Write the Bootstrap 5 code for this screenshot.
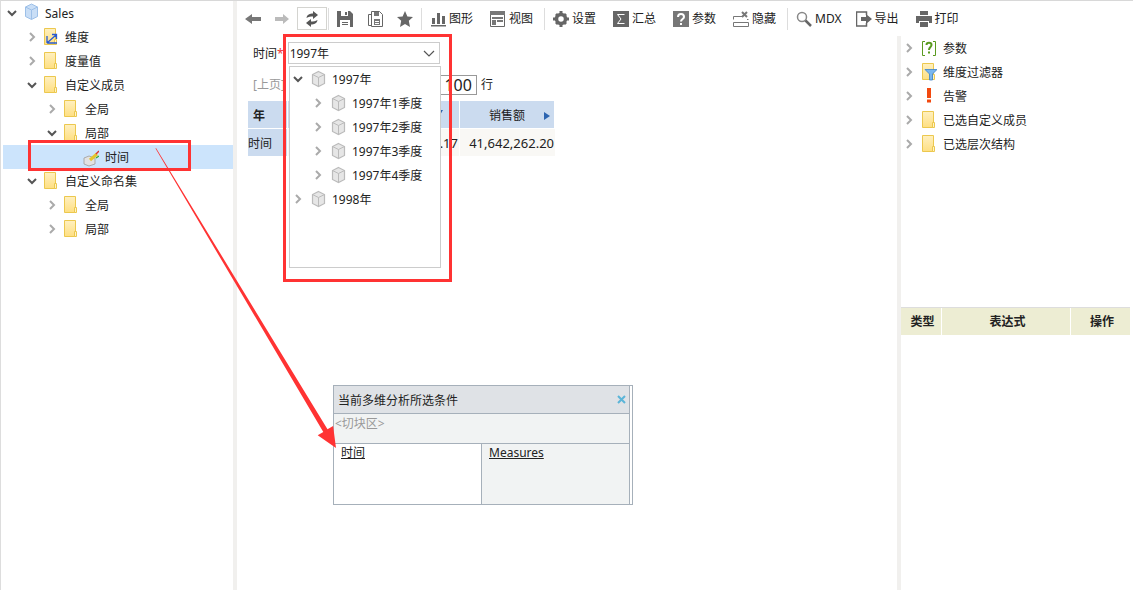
<!DOCTYPE html>
<html lang="zh"><head><meta charset="utf-8"><title>Sales</title>
<link href="https://cdn.jsdelivr.net/npm/bootstrap@5.3.0/dist/css/bootstrap.min.css" rel="stylesheet">
<style>
html,body{height:100%;overflow:hidden}
body{font:12px/16px "Noto Sans","Noto Sans CJK SC",sans-serif;color:#222;background:#fff;position:relative}
.app-frame{height:590px;border-top:1px solid #d8d8d8;border-left:1px solid #ddd}
.side-pane{width:232px;flex:none;padding:0 0 0 2px}
.vsplit{width:4px;flex:none;background:#f1f0ee}
.work-area{flex:1;min-width:0;display:flex;flex-direction:column}
.work-body{flex:1;display:flex;min-height:0}
.main-pane{width:660px;flex:none;position:relative;padding-left:11px}
.right-pane{flex:1;margin-right:3px}
.tree-row{height:24px;padding-top:2px;display:flex;align-items:center;white-space:nowrap}
.tree-row.sel{background:#cce4fc}
.tw{width:16px;height:16px;flex:none;margin:-2px 3px 0 0}
.ic{width:16px;height:20px;flex:none;margin:-2px 6px 0 0}
.lv0{padding-left:1px}.lv1{padding-left:21px}.lv2{padding-left:41px}.lv3{padding-left:80px}
.tool-bar{height:35px;padding-left:8px;display:flex;align-items:center}
.tool{display:flex;align-items:center;gap:3px;margin-right:17px;white-space:nowrap}
.tool svg{width:16px;height:16px;flex:none}
.tool-tight{margin-right:14px}
.tool-star{margin-right:8px}
.tool-mid{margin-right:11px}
.tool-chart svg{width:15px}
.tool-box{width:30px;height:23px;flex:none;border:1px solid #d4d4d0;display:flex;align-items:center;justify-content:center;margin:0 1px 0 -8px}
.tool-box svg{width:16px;height:16px}
.tsep{width:1px;height:22px;flex:none;background:#ddd;margin-right:8px}
.tsep-wide{margin-right:9px}
.filter-row{height:22px;padding-left:5px;display:flex;align-items:center;margin-top:6px;padding-top:0}
.filter-label{padding-top:1px}
.req-mark{color:#e33}
.combo{margin-left:4px;position:relative;width:152px;height:22px;border:1px solid #ccc;padding:1px 0 0 1px;line-height:20px;background:#fff}
.combo svg{position:absolute;right:3px;top:4px;width:14px;height:12px}
.pager{height:20px;padding-left:5px;margin-top:11px;display:flex;align-items:center;color:#999}
.pageinput{margin-left:145px;width:47px;height:20px;border:1px solid #999;color:#222;line-height:18px;padding-right:4px;font-size:16px;text-align:right}
.pager-unit{margin-left:4px;color:#222}
.cube-grid{margin-top:6px;table-layout:fixed;width:307px;border-collapse:separate;border-spacing:0;font-size:13px}
.cube-grid th{background:#cbdbef;height:28px;font-weight:400;font-size:12px;padding:3px 0 0;border-right:1px solid #fff;border-bottom:1px solid #fff}
.cube-grid td{height:27px;padding:0 1px 0 0;background:#f9f8f5;white-space:nowrap;border-right:1px solid #fff}
.cube-grid td:last-child{border-right:0}
.cube-grid td.hd{background:#cbdbef;font-size:12px;padding-top:3px}
.cube-grid th.yr{font-weight:700;padding-left:5px}
.c1{width:40px}.c2{width:172px}.c3{width:95px}
.dd-panel{position:absolute;left:52px;top:30px;width:152px;height:202px;border:1px solid #ccc;background:#fff;z-index:3}
.dd-panel .tw{margin-right:5px}
.dd-panel .ic{margin-right:5px}
.dd-panel .l1{padding-left:20px}
.red-box{position:absolute;border:3px solid #f33;z-index:5;pointer-events:none}
.rb1{left:28px;top:140px;width:163px;height:31px}
.rb2{left:283px;top:34px;width:169px;height:248px}
.arrow-layer{position:absolute;left:0;top:0;width:1133px;height:592px;z-index:6;pointer-events:none}
.rp-tree{height:271px}
.rp-tree .tw{margin-right:4px}
.cond-grid{border-top:1px solid #ddd;display:grid;grid-template-columns:40px 128px 1fr;gap:0 1px;background:#fff;height:27px}
.cond-grid div{background:#ededd3;font-weight:700;font-size:12px;text-align:center;line-height:27px;padding-left:3px}
.dlg{position:absolute;left:333px;top:385px;width:300px;height:120px;border:1px solid #a6b0ba;background:#fff;z-index:4}
.dlg-inner{width:296px;border-right:1px solid #a6b0ba;height:100%;display:flex;flex-direction:column}
.dlg-head{height:28px;background:#dfe2e6;border-bottom:1px solid #a6b0ba;padding-left:4px;line-height:29px;position:relative}
.dlg-x{position:absolute;right:3px;top:9px;width:9px;height:9px}
.dlg-slice{height:30px;background:#f1f3f3;border-bottom:1px solid #a6b0ba;color:#999;line-height:20px;padding-left:1px}
.dlg-cols{flex:1;display:flex}
.dlg-c1{width:148px;border-right:1px solid #a6b0ba;padding:1px 0 0 7px;text-decoration:underline}
.dlg-c2{flex:1;background:#f1f3f3;padding:1px 0 0 7px;text-decoration:underline}
</style></head><body>
<svg width="0" height="0" class="position-absolute">
<defs>
<linearGradient id="fg" x1="0" y1="0" x2="0" y2="1"><stop offset="0" stop-color="#fff0c0"/><stop offset="1" stop-color="#fedf82"/></linearGradient>
<symbol id="open" viewBox="0 0 16 16"><path d="M4 6l4 4 4-4" fill="none" stroke="#555" stroke-width="2"/></symbol>
<symbol id="closed" viewBox="0 0 16 16"><path d="M6 4l4 4-4 4" fill="none" stroke="#aaa" stroke-width="2"/></symbol>
<symbol id="folder" viewBox="0 0 16 20"><path d="M1.500 1.500h11v16h-11z" fill="url(#fg)" stroke="#ecc84e"/><path d="M11.500 12.500h2v5h-2z" fill="#fff3c8" stroke="#ecc84e"/></symbol>
<symbol id="cube" viewBox="0 0 16 20"><path d="M7.500 2.500l6 3v9l-6 3-6-3v-9z" fill="#e6e6e6" stroke="#bbb" stroke-width="1.200"/><path d="M1.500 5.500l6 3 6-3M7.500 8.500v9" fill="none" stroke="#bbb"/></symbol>
<symbol id="bluecube" viewBox="0 0 16 20"><path d="M8.500 1l6 3v9.500l-6 3-6-3V4z" fill="#c9def6" stroke="#9dc0e8"/><path d="M2.500 4l6 3 6-3M8.500 7v9.500" fill="none" stroke="#9dc0e8"/></symbol>
</defs></svg>

<div class="app-frame d-flex">
<aside class="side-pane">
<div class="tree-row lv0"><svg class="tw"><use href="#open"/></svg><svg class="ic"><use href="#bluecube"/></svg>Sales</div>
<div class="tree-row lv1"><svg class="tw"><use href="#closed"/></svg><svg class="ic" viewBox="0 0 16 20"><use href="#folder"/><path d="M4 16V9M4 16h10M4 16l9-8M9 7.500h4.500V12" fill="none" stroke="#2a5bd0" stroke-width="1.300"/></svg>维度</div>
<div class="tree-row lv1"><svg class="tw"><use href="#closed"/></svg><svg class="ic"><use href="#folder"/></svg>度量值</div>
<div class="tree-row lv1"><svg class="tw"><use href="#open"/></svg><svg class="ic"><use href="#folder"/></svg>自定义成员</div>
<div class="tree-row lv2"><svg class="tw"><use href="#closed"/></svg><svg class="ic"><use href="#folder"/></svg>全局</div>
<div class="tree-row lv2"><svg class="tw"><use href="#open"/></svg><svg class="ic"><use href="#folder"/></svg>局部</div>
<div class="tree-row lv3 sel"><svg class="ic" viewBox="0 0 16 20"><path d="M1 11l5-2 6 2v6l-6 2-5-2z" fill="#e2e2e2" stroke="#aaa"/><path d="M7 13l7-6" stroke="#e4c52f" stroke-width="3"/><path d="M13 7l3-3" stroke="#d33" stroke-width="1.500"/><path d="M13 11l3-2" stroke="#3a3" stroke-width="1.200"/></svg>时间</div>
<div class="tree-row lv1"><svg class="tw"><use href="#open"/></svg><svg class="ic"><use href="#folder"/></svg>自定义命名集</div>
<div class="tree-row lv2"><svg class="tw"><use href="#closed"/></svg><svg class="ic"><use href="#folder"/></svg>全局</div>
<div class="tree-row lv2"><svg class="tw"><use href="#closed"/></svg><svg class="ic"><use href="#folder"/></svg>局部</div>
</aside>
<div class="vsplit"></div>
<div class="work-area">
<div class="tool-bar">
<div class="tool tool-tight"><svg viewBox="0 0 16 16"><path d="M0 8l7-5v3h9v4H7v3z" fill="#777"/></svg></div>
<div class="tool tool-tight"><svg viewBox="0 0 16 16"><path d="M14 8L8 3v3H0v4h8v3z" fill="#bbb"/></svg></div>
<div class="tool-box"><svg viewBox="0 0 16 16"><path d="M2.500 7C3 3.500 6 2.500 9 2.500V0l5 4-5 4V5.500C6.500 5.500 4.500 5.500 2.500 7z" fill="#555"/><path d="M13.500 9C13 12.500 10 13.500 7 13.500V16l-5-4 5-4v2.500c2.500 0 4.500 0 6.500-1.500z" fill="#555"/></svg></div>
<div class="tsep"></div>
<div class="tool tool-tight"><svg viewBox="0 0 16 16"><path d="M0 0h13l3 3v13H0z" fill="#666"/><path d="M4 0h7v5H4zM3 9h10v7H3z" fill="#fff"/><path d="M8 1h2v3H8zM5 11h6v1H5zM5 13h6v1H5z" fill="#666"/></svg></div>
<div class="tool tool-tight"><svg viewBox="0 0 16 16"><path d="M1.500 3.500h3v11h-3zM4.500.500h8l3 3v12h-11z" fill="#fff" stroke="#666"/><path d="M7 1h5v4H7zM7 8h6v6H7z" fill="#777"/><path d="M8 10h4v1H8zM8 12h4v1H8z" fill="#fff"/></svg></div>
<div class="tool tool-star"><svg viewBox="0 0 16 16"><path d="M8 0l2.400 5.400 5.600.6-4.200 3.800L13 16l-5-3-5 3 1.200-6.200L0 6l5.600-.6z" fill="#666"/></svg></div>
<div class="tsep tsep-wide"></div>
<div class="tool tool-chart"><svg viewBox="0 0 15 16"><path d="M1 7h3v6H1zM6 2h3v11H6zM11 5h3v8h-3z" fill="#666"/><path d="M0 14h15v1.500H0z" fill="#666"/></svg>图形</div>
<div class="tool tool-mid"><svg viewBox="0 0 16 16"><path d="M.5.500h14v15H.5z" fill="#fff" stroke="#666"/><path d="M0 0h15v4H0zM2 6h11v2H2zM2 9h4v5H2zM7 9h6v2H7z" fill="#777"/></svg>视图</div>
<div class="tsep"></div>
<div class="tool"><svg viewBox="0 0 16 16"><circle cx="8" cy="8" r="4.500" fill="none" stroke="#666" stroke-width="3.500"/><path d="M6.500 0h3v3h-3zM6.500 13h3v3h-3zM0 6.500h3v3H0zM13 6.500h3v3h-3zM2 4l2-2 2 2-2 2zM10 12l2-2 2 2-2 2zM12 2l2 2-2 2-2-2zM4 10l2 2-2 2-2-2z" fill="#666"/></svg>设置</div>
<div class="tool"><svg viewBox="0 0 16 16"><path d="M0 0h16v16H0z" fill="#666"/><path d="M11.500 3.500H4.500L8 8l-3.500 4.500h7" fill="none" stroke="#fff"/></svg>汇总</div>
<div class="tool"><svg viewBox="0 0 16 16"><path d="M0 0h16v16H0z" fill="#777"/><path d="M5 6c0-4 6-4 6 0 0 2-3 2-3 4.500" fill="none" stroke="#fff" stroke-width="2"/><path d="M7 12h2v2H7z" fill="#fff"/></svg>参数</div>
<div class="tool tool-mid"><svg viewBox="0 0 16 16"><path d="M.5 5.500H9M.5 5.500v3M14 8.500h1.500M.5 11.500h15v4H.5z" fill="none" stroke="#777"/><path d="M9 1l5 5M14 1L9 6" stroke="#777" stroke-width="2"/></svg>隐藏</div>
<div class="tsep"></div>
<div class="tool tool-tight"><svg viewBox="0 0 16 16"><circle cx="6" cy="6" r="4.500" fill="none" stroke="#888" stroke-width="1.500"/><path d="M9.500 9.500L15 15" stroke="#666" stroke-width="2.500"/></svg>MDX</div>
<div class="tool"><svg viewBox="0 0 16 16"><path d="M10.500 4V1H.5v14h10v-3" fill="none" stroke="#666" stroke-width="1.500"/><path d="M5 6h5V3l6 5-6 5v-3H5z" fill="#666"/></svg>导出</div>
<div class="tool"><svg viewBox="0 0 16 16"><path d="M4 0h8v4H4zM0 5h16v7h-3v-2H3v2H0zM4 11h8v5H4z" fill="#666"/></svg>打印</div>
</div>
<div class="work-body">
<main class="main-pane">
<div class="filter-row"><span class="filter-label">时间<span class="req-mark">*</span></span><div class="combo">1997年<svg viewBox="0 0 14 12"><path d="M2 4l5 5 5-5" fill="none" stroke="#555" stroke-width="1.200"/></svg></div></div>
<div class="dd-panel">
<div class="tree-row"><svg class="tw"><use href="#open"/></svg><svg class="ic"><use href="#cube"/></svg>1997年</div>
<div class="tree-row l1"><svg class="tw"><use href="#closed"/></svg><svg class="ic"><use href="#cube"/></svg>1997年1季度</div>
<div class="tree-row l1"><svg class="tw"><use href="#closed"/></svg><svg class="ic"><use href="#cube"/></svg>1997年2季度</div>
<div class="tree-row l1"><svg class="tw"><use href="#closed"/></svg><svg class="ic"><use href="#cube"/></svg>1997年3季度</div>
<div class="tree-row l1"><svg class="tw"><use href="#closed"/></svg><svg class="ic"><use href="#cube"/></svg>1997年4季度</div>
<div class="tree-row"><svg class="tw"><use href="#closed"/></svg><svg class="ic"><use href="#cube"/></svg>1998年</div>
</div>
<div class="pager">[上页]<div class="pageinput">100</div><span class="pager-unit">行</span></div>
<table class="cube-grid"><tr><th class="c1 yr">年</th><th class="c2 text-end pe-3"><svg width="6" height="6" viewBox="0 0 6 6" class="mb-2"><path d="M0 0h6L3 5z" fill="#2c64b0"/></svg></th><th class="c3 text-center position-relative">销售额<svg class="position-absolute end-0 me-1 mt-1" width="6" height="8" viewBox="0 0 6 8"><path d="M0 0l6 4-6 4z" fill="#2c64b0"/></svg></th></tr>
<tr><td class="hd">时间</td><td class="text-end">.17</td><td class="text-end">41,642,262.20</td></tr></table>
</main>
<div class="vsplit"></div>
<section class="right-pane">
<div class="rp-tree">
<div class="tree-row"><svg class="tw"><use href="#closed"/></svg><svg class="ic" viewBox="0 0 16 20"><path d="M4 3.500H1.500v14H4M12 3.500h2.500v14H12" fill="none" stroke="#5a9a20"/><path d="M5.500 7c0-3 5-3 5 0 0 2-2.500 2-2.500 5" fill="none" stroke="#5a9a20" stroke-width="2"/><path d="M7 13.500h2v2H7z" fill="#5a9a20"/></svg>参数</div>
<div class="tree-row"><svg class="tw"><use href="#closed"/></svg><svg class="ic" viewBox="0 0 16 20"><use href="#folder"/><path d="M4 7.500h12l-4.500 4.500v6h-3v-6z" fill="#7ab6ee" stroke="#3b82c9" stroke-width=".8"/></svg>维度过滤器</div>
<div class="tree-row"><svg class="tw"><use href="#closed"/></svg><svg class="ic" viewBox="0 0 16 20"><path d="M6 2h4v10H6zM6 13.500h4v3H6z" fill="#f2490f"/></svg>告警</div>
<div class="tree-row"><svg class="tw"><use href="#closed"/></svg><svg class="ic"><use href="#folder"/></svg>已选自定义成员</div>
<div class="tree-row"><svg class="tw"><use href="#closed"/></svg><svg class="ic"><use href="#folder"/></svg>已选层次结构</div>
</div>
<div class="cond-grid"><div>类型</div><div>表达式</div><div>操作</div></div>
</section>
</div>
</div>
</div>

<div class="dlg"><div class="dlg-inner">
<div class="dlg-head">当前多维分析所选条件<svg class="dlg-x" viewBox="0 0 9 9"><path d="M1 1l7 7M8 1L1 8" stroke="#5bb5d8" stroke-width="2"/></svg></div>
<div class="dlg-slice">&lt;切块区&gt;</div>
<div class="dlg-cols"><div class="dlg-c1">时间</div><div class="dlg-c2">Measures</div></div>
</div></div>

<div class="red-box rb1"></div>
<div class="red-box rb2"></div>
<svg class="arrow-layer" viewBox="0 0 1133 592"><path d="M156 148 327.500 429.300 333.100 426 336 448 317.700 435.200 323.300 431.900 155.500 148.500z" fill="#f33"/></svg>
</body></html>
